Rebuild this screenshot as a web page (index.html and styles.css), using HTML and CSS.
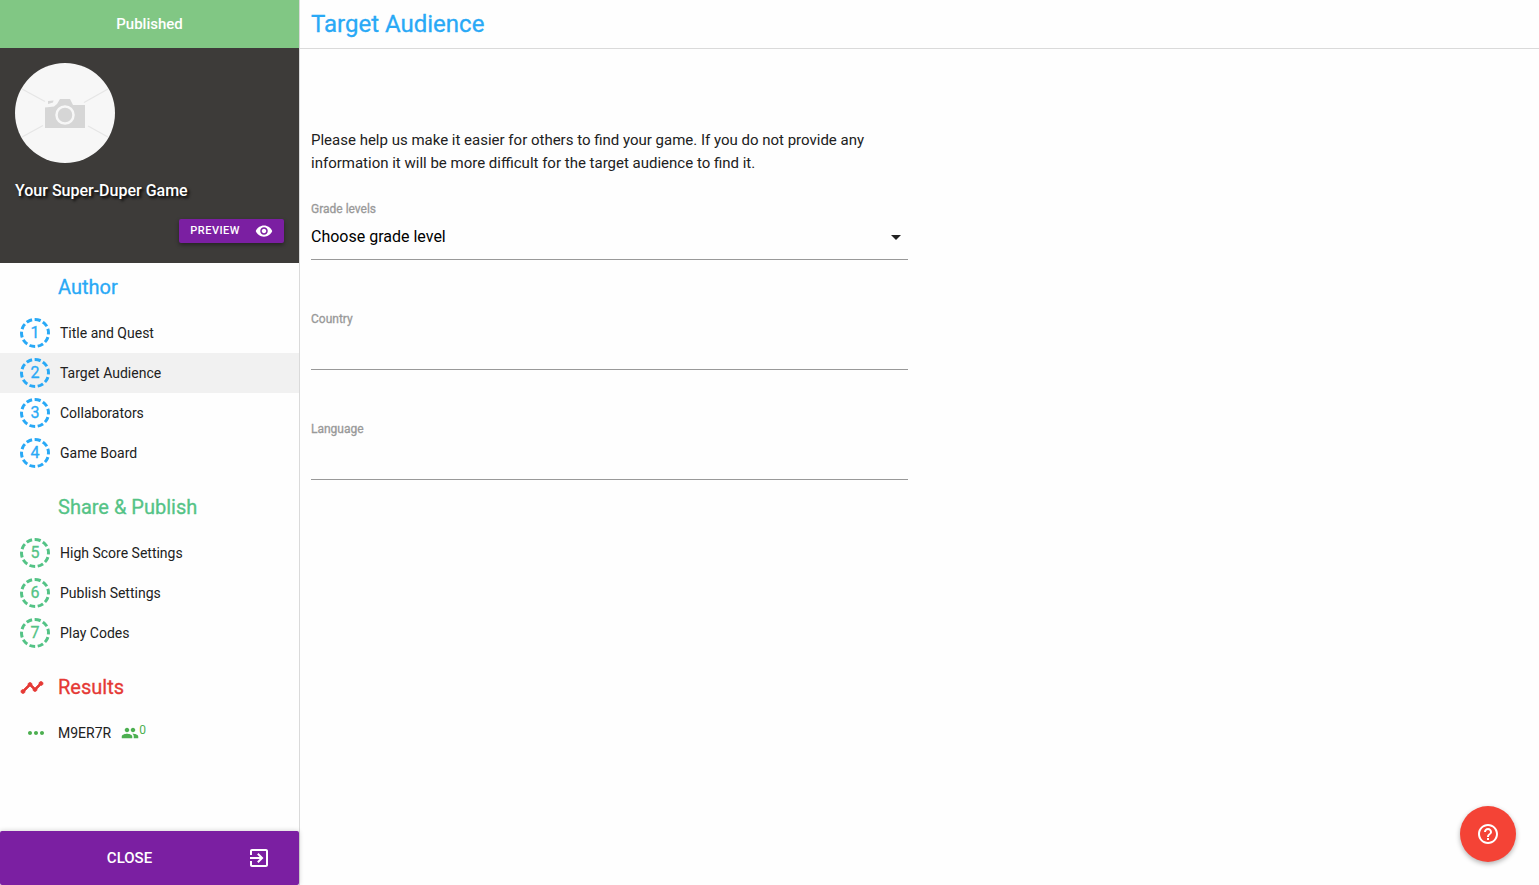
FILE: index.html
```html
<!DOCTYPE html>
<html lang="en">
<head>
<meta charset="utf-8">
<meta name="viewport" content="width=device-width, initial-scale=1">
<title>Target Audience</title>
<link rel="stylesheet" href="styles.css">
</head>
<body>
<div class="app">
  <aside class="sidebar">
    <div class="status">Published</div>
    <section class="game">
      <svg class="avatar" viewBox="0 0 100 100" role="img" aria-label="Game picture">
        <circle cx="50" cy="50" r="50" fill="#f7f7f7"/>
        <path d="M7 26 30 38.500M93 26 69 39.500M7 74 28 62.500M93 74 73 63" stroke="#e6e6e6" stroke-width="1.300" fill="none"/>
        <path d="M30 65V44.500L39 43.500 42 41 45 36H55L58 42H70V65Z" fill="#d6d6d6"/>
        <path d="M33 38 38.500 37.500 38 39.500 33 41Z" fill="#d6d6d6"/>
        <circle cx="50" cy="52" r="8.500" fill="#d6d6d6" stroke="#f7f7f7" stroke-width="2.500"/>
      </svg>
      <h2 class="game-title">Your Super-Duper Game</h2>
      <button class="preview" type="button"><span>PREVIEW</span>
        <svg width="18" height="18" viewBox="0 0 24 24" fill="currentColor" aria-hidden="true"><path d="M12 4.500C7 4.500 2.730 7.610 1 12c1.730 4.390 6 7.500 11 7.500s9.270-3.110 11-7.500c-1.730-4.390-6-7.500-11-7.500zM12 17c-2.760 0-5-2.240-5-5s2.240-5 5-5 5 2.240 5 5-2.240 5-5 5zm0-8c-1.660 0-3 1.340-3 3s1.340 3 3 3 3-1.340 3-3-1.340-3-3-3z"/></svg>
      </button>
    </section>
    <nav class="nav">
      <section class="group author">
        <h3 class="heading">Author</h3>
        <a class="step" href="#title"><span class="num">1</span>Title and Quest</a>
        <a class="step active" href="#audience" aria-current="page"><span class="num">2</span>Target Audience</a>
        <a class="step" href="#collaborators"><span class="num">3</span>Collaborators</a>
        <a class="step" href="#board"><span class="num">4</span>Game Board</a>
      </section>
      <section class="group publish">
        <h3 class="heading">Share &amp; Publish</h3>
        <a class="step" href="#scores"><span class="num">5</span>High Score Settings</a>
        <a class="step" href="#publish"><span class="num">6</span>Publish Settings</a>
        <a class="step" href="#codes"><span class="num">7</span>Play Codes</a>
      </section>
      <section class="group results">
        <h3 class="heading"><svg width="24" height="24" viewBox="0 0 24 24" fill="currentColor" stroke="currentColor" stroke-width="0.800" aria-hidden="true"><path d="M23 8.500c0 1.100-.9 2-2 2-.18 0-.35-.02-.51-.07l-3.560 3.550c.05.16.07.34.07.52 0 1.100-.9 2-2 2s-2-.9-2-2c0-.18.02-.36.07-.52l-2.550-2.550c-.16.05-.34.07-.52.07s-.36-.02-.52-.07l-4.550 4.560c.05.16.07.33.07.51 0 1.100-.9 2-2 2s-2-.9-2-2 .9-2 2-2c.18 0 .35.02.51.07l4.560-4.550C8.020 9.860 8 9.680 8 9.500c0-1.100.9-2 2-2s2 .9 2 2c0 .18-.02.36-.07.52l2.550 2.550c.16-.05.34-.07.52-.07s.36.02.52.07l3.550-3.560C19.020 8.850 19 8.680 19 8.500c0-1.100.9-2 2-2s2 .9 2 2z"/></svg>Results</h3>
        <a class="session" href="#session">
          <svg class="dots" width="24" height="24" viewBox="0 0 24 24" fill="currentColor" aria-hidden="true"><path d="M6 10c-1.100 0-2 .9-2 2s.9 2 2 2 2-.9 2-2-.9-2-2-2zm12 0c-1.100 0-2 .9-2 2s.9 2 2 2 2-.9 2-2-.9-2-2-2zm-6 0c-1.100 0-2 .9-2 2s.9 2 2 2 2-.9 2-2-.9-2-2-2z"/></svg>
          <span>M9ER7R</span>
          <span class="players"><svg width="18" height="18" viewBox="0 0 24 24" fill="currentColor" aria-hidden="true"><path d="M16 11c1.660 0 2.990-1.340 2.990-3S17.660 5 16 5s-3 1.340-3 3 1.340 3 3 3zm-8 0c1.660 0 2.990-1.340 2.990-3S9.660 5 8 5 5 6.340 5 8s1.340 3 3 3zm0 2c-2.330 0-7 1.170-7 3.500V19h14v-2.500C15 14.170 10.330 13 8 13zm8 0c-.29 0-.62.02-.97.05 1.160.84 1.970 1.970 1.970 3.450V19h6v-2.500c0-2.330-4.670-3.500-7-3.500z"/></svg><span class="count">0</span></span>
        </a>
      </section>
    </nav>
    <button class="close" type="button"><span>CLOSE</span>
      <svg width="24" height="24" viewBox="0 0 24 24" fill="currentColor" aria-hidden="true"><path d="M10.090 15.590 11.500 17l5-5-5-5-1.410 1.410L12.670 11H3v2h9.670l-2.580 2.590zM19 3H5c-1.110 0-2 .9-2 2v4h2V5h14v14H5v-4H3v4c0 1.100.89 2 2 2h14c1.100 0 2-.9 2-2V5c0-1.100-.9-2-2-2z"/></svg>
    </button>
  </aside>
  <main class="main">
    <header class="topbar"><h1 class="title">Target Audience</h1></header>
    <form class="form">
      <p class="intro">Please help us make it easier for others to find your game. If you do not provide any information it will be more difficult for the target audience to find it.</p>
      <div class="field">
        <label for="grade">Grade levels</label>
        <div class="select-wrap">
          <select id="grade"><option>Choose grade level</option></select>
          <svg class="caret" width="10" height="5" viewBox="0 0 10 5" aria-hidden="true"><path d="M0 0h10L5 5z" fill="#212121"/></svg>
        </div>
      </div>
      <div class="field"><label for="country">Country</label><input id="country" type="text"></div>
      <div class="field"><label for="language">Language</label><input id="language" type="text"></div>
    </form>
  </main>
</div>
<button class="help" type="button" aria-label="Help">
  <svg width="24" height="24" viewBox="0 0 24 24" fill="currentColor" aria-hidden="true"><path d="M11 18h2v-2h-2v2zm1-16C6.480 2 2 6.480 2 12s4.480 10 10 10 10-4.480 10-10S17.520 2 12 2zm0 18c-4.410 0-8-3.590-8-8s3.590-8 8-8 8 3.590 8 8-3.590 8-8 8zm0-14c-2.210 0-4 1.790-4 4h2c0-1.100.9-2 2-2s2 .9 2 2c0 2-3 1.750-3 5h2c0-2.250 3-2.500 3-5 0-2.210-1.790-4-4-4z"/></svg>
</button>
</body>
</html>
```

FILE: styles.css
```css
* {
  box-sizing: border-box;
}

body {
  margin: 0;
  background: #fefefe;
  color: #212121;
  font-family: Roboto, "Liberation Sans", sans-serif;
  font-size: 14px;
}

button,
input,
select {
  font-family: inherit;
  border: 0;
  margin: 0;
}

button {
  cursor: pointer;
}

h1,
h2,
h3,
p {
  margin: 0;
  font-weight: 400;
}

.app {
  display: flex;
  min-height: 100vh;
}

.sidebar {
  display: flex;
  flex: none;
  flex-direction: column;
  width: 300px;
  border-right: 1px solid #dadada;
}

.status {
  background: #81c784;
  color: #fff;
  font-size: 15px;
  font-weight: 500;
  line-height: 48px;
  text-align: center;
}

.game {
  display: flex;
  flex-direction: column;
  padding: 15px 15px 20px;
  background: #3d3b39;
  color: #fff;
}

.avatar {
  width: 100px;
  height: 100px;
}

.game-title {
  padding: 15px 0 16px;
  font-size: 16px;
  font-weight: 500;
  line-height: 25px;
  text-shadow: 2px 2px 3px #000;
}

.preview {
  display: flex;
  align-items: center;
  align-self: flex-end;
  gap: 15px;
  height: 24px;
  padding: 0 11px;
  border-radius: 2px;
  background: #7b1fa2;
  box-shadow: 0 2px 4px rgba(0, 0, 0, 0.4);
  color: #fff;
  font-size: 11px;
  font-weight: 500;
  letter-spacing: 0.5px;
}

.preview span {
  padding-bottom: 2px;
}

.nav {
  display: flex;
  flex: 1;
  flex-direction: column;
  gap: 10px;
}

.author {
  color: #29a9f6;
}

.publish {
  color: #54c386;
}

.results {
  color: #e53935;
}

.heading {
  display: flex;
  align-items: center;
  gap: 14px;
  height: 50px;
  padding: 0 0 2px 58px;
  font-size: 20px;
  font-weight: 400;
  -webkit-text-stroke: 0.3px currentColor;
}

.results .heading {
  padding-left: 20px;
}

.step,
.session {
  display: flex;
  align-items: center;
  height: 40px;
  color: #212121;
  text-decoration: none;
}

.step {
  gap: 10px;
  padding-left: 20px;
}

.active {
  background: #f1f1f1;
}

.num {
  width: 30px;
  height: 30px;
  border: 3px dashed;
  border-radius: 50%;
  font-size: 16px;
  line-height: 24px;
  text-align: center;
  -webkit-text-stroke: 0.3px currentColor;
}

.author .num {
  color: #29a9f6;
}

.publish .num {
  color: #54c386;
}

.session {
  gap: 10px;
  padding-left: 24px;
}

.dots,
.players {
  color: #4caf50;
}

.players {
  display: flex;
}

.count {
  font-size: 12px;
  line-height: 12px;
}

.close {
  display: grid;
  grid-template-columns: 1fr 24px;
  align-items: center;
  height: 54px;
  padding: 0 28px 0 12px;
  border-radius: 2px;
  background: #7b1fa2;
  box-shadow: 0 0 5px rgba(0, 0, 0, 0.2);
  color: #fff;
  font-size: 15px;
  font-weight: 500;
}

.main {
  flex: 1;
}

.topbar {
  height: 49px;
  padding: 0 11px;
  border-bottom: 1px solid #dadada;
}

.title {
  color: #29a9f6;
  font-size: 24px;
  line-height: 48px;
  -webkit-text-stroke: 0.3px currentColor;
}

.form {
  width: 50%;
  padding: 80px 12px 0 11px;
}

.intro {
  margin-bottom: 25px;
  font-size: 15px;
  line-height: 23px;
}

.field {
  display: flex;
  flex-direction: column;
  height: 60px;
  margin-bottom: 50px;
}

.field label {
  color: #999;
  font-size: 12px;
  line-height: 18px;
  -webkit-text-stroke: 0.3px currentColor;
}

.field input,
.field select {
  flex: 1;
  width: 100%;
  padding: 0 0 4px;
  border-bottom: 1px solid #999;
  border-radius: 0;
  outline: 0;
  background: transparent;
  color: #000;
  font-size: 16px;
}

.field select {
  appearance: none;
}

.select-wrap {
  position: relative;
  display: flex;
  flex: 1;
}

.caret {
  position: absolute;
  top: 17px;
  right: 7px;
  pointer-events: none;
}

.help {
  position: fixed;
  right: 23px;
  bottom: 23px;
  display: grid;
  place-items: center;
  width: 56px;
  height: 56px;
  padding: 0;
  border-radius: 50%;
  background: #f44336;
  box-shadow: 0 2px 5px rgba(0, 0, 0, 0.3);
  color: #fff;
}
```
